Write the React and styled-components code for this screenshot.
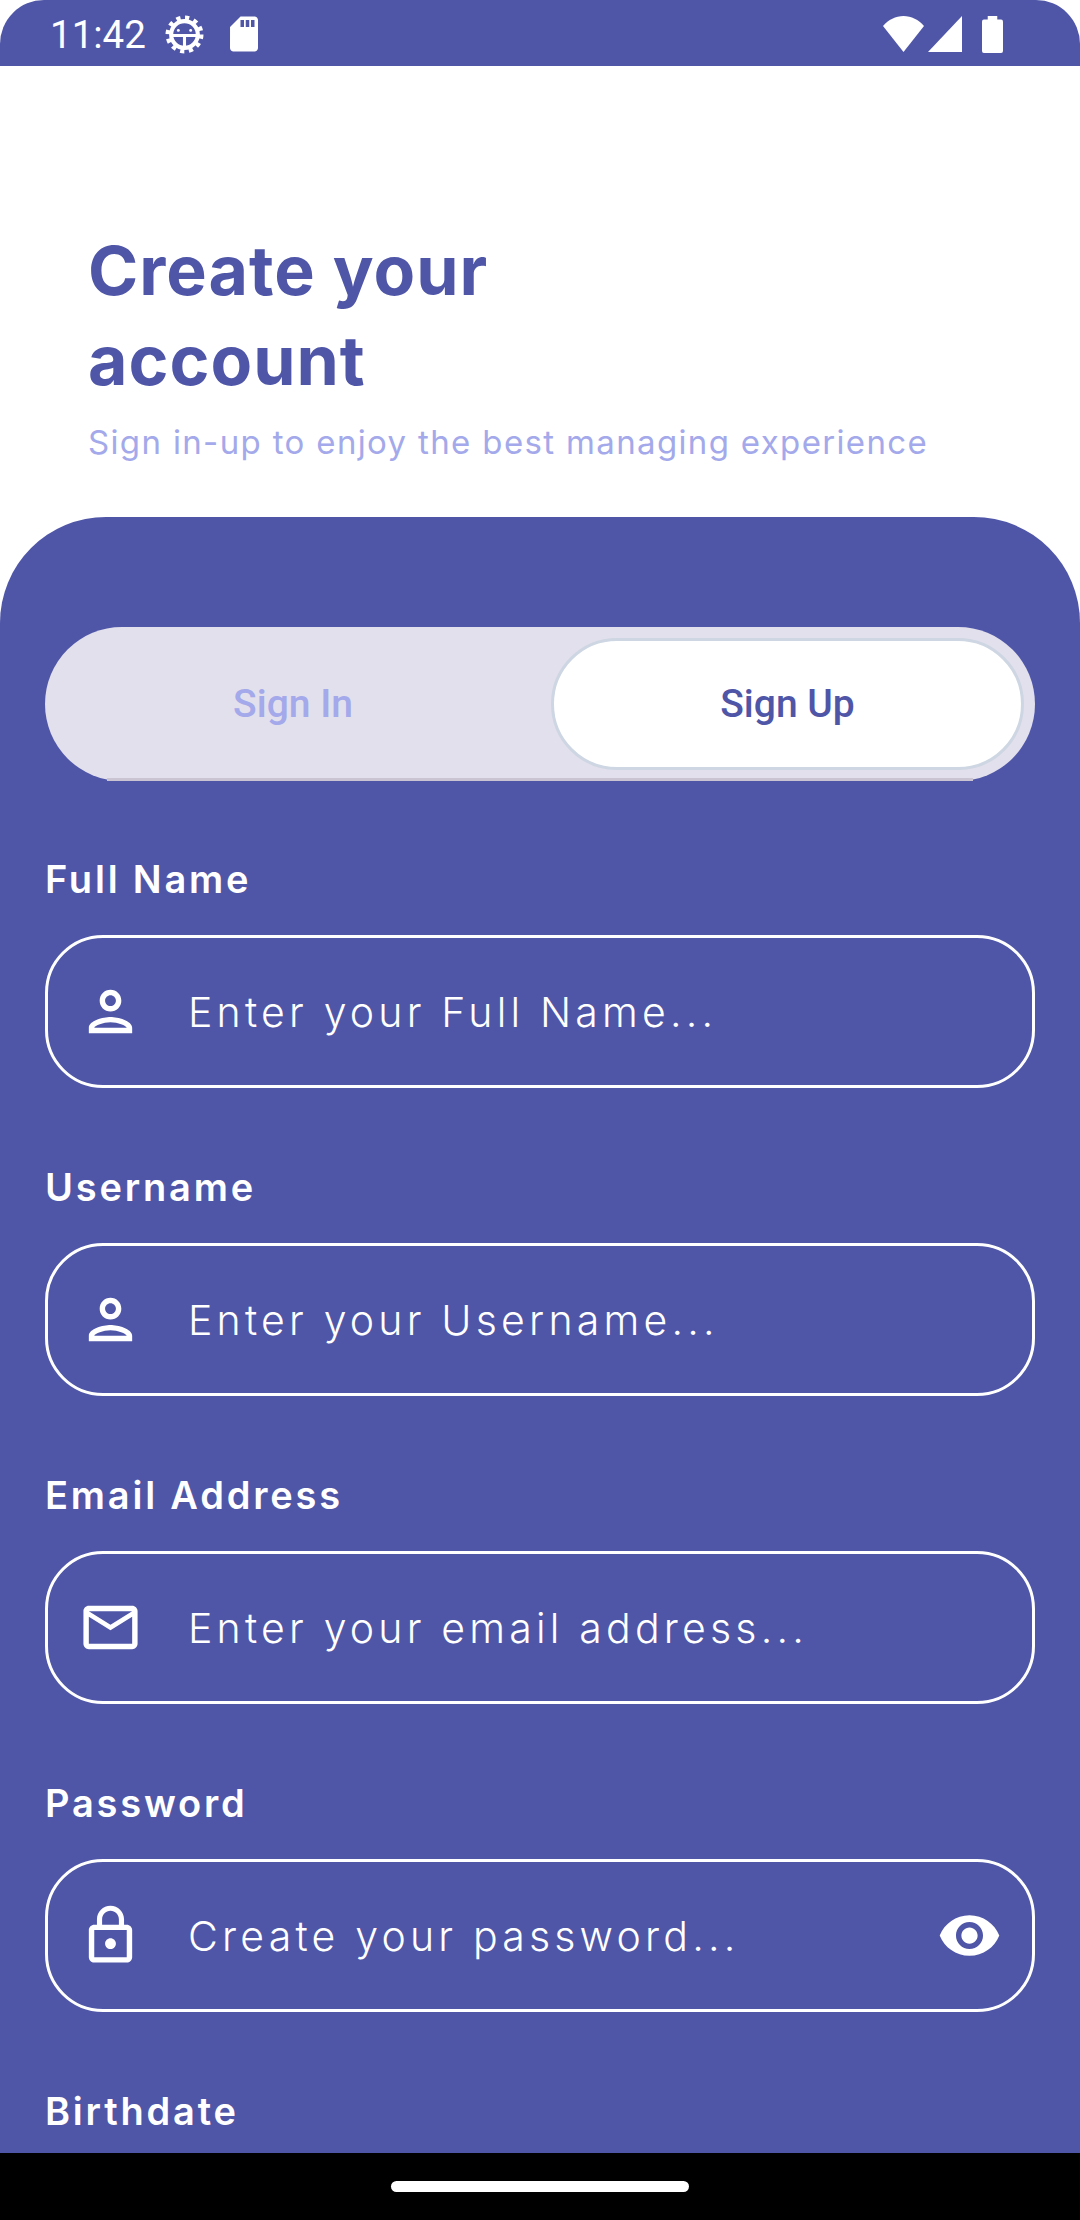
import styled, { createGlobalStyle } from 'styled-components';
import { MdOutlinePerson, MdMailOutline, MdLockOutline, MdVisibility, MdSdCard } from 'react-icons/md';

const INDIGO = '#4f56a8';

const GlobalStyle = createGlobalStyle`
  html, body {
    margin: 0;
    padding: 0;
    background: #000;
  }
  * {
    box-sizing: border-box;
  }
`;

const Screen = styled.div`
  width: 1080px;
  height: 2220px;
  display: flex;
  flex-direction: column;
  overflow: hidden;
  background: #fff;
  font-family: Inter, "Open Sans", sans-serif;
`;

const StatusBar = styled.div`
  flex: none;
  height: 66px;
  display: flex;
  align-items: center;
  justify-content: space-between;
  padding: 2px 77px 0 50px;
  background: ${INDIGO};
  border-radius: 44px 44px 0 0;
  color: #fff;
`;

const StatusGroup = styled.div`
  display: flex;
  align-items: center;
  gap: ${(p) => p.$gap}px;
`;

const Clock = styled.span`
  font-family: Roboto, sans-serif;
  font-size: 38.5px;
`;

const Content = styled.div`
  flex: 1;
  min-height: 0;
  display: flex;
  flex-direction: column;
  overflow: hidden;
`;

const Intro = styled.header`
  flex: none;
  padding: 160px 88px 55px;
`;

const Title = styled.h1`
  margin: 0;
  width: 500px;
  font-size: 68px;
  line-height: 89.5px;
  font-weight: 700;
  letter-spacing: 1px;
  color: ${INDIGO};
`;

const Subtitle = styled.p`
  margin: 17px 0 0;
  font-size: 33px;
  line-height: 40px;
  font-weight: 400;
  letter-spacing: 1.35px;
  white-space: nowrap;
  color: #a3a9ea;
`;

const Card = styled.section`
  flex: 1;
  min-height: 0;
  padding: 110px 45px 0;
  background: ${INDIGO};
  border-radius: 106px 106px 0 0;
`;

const Toggle = styled.div`
  position: relative;
  height: 154px;
  display: flex;
  align-items: center;
  padding: 0 11px 0 0;
  background: #e2e0ec;
  border-radius: 77px;

  &::after {
    content: '';
    position: absolute;
    left: 62px;
    right: 62px;
    bottom: 0;
    height: 3px;
    background: #c9c3d2;
  }
`;

const Tab = styled.div`
  height: 132px;
  width: ${(p) => (p.$active ? '473px' : 'auto')};
  flex: ${(p) => (p.$active ? 'none' : 1)};
  display: flex;
  align-items: center;
  justify-content: center;
  padding-right: ${(p) => (p.$active ? 0 : '10px')};
  font-family: Roboto, sans-serif;
  font-size: 39px;
  font-weight: 500;
  color: ${(p) => (p.$active ? INDIGO : '#a3a9ea')};
  background: ${(p) => (p.$active ? '#fff' : 'transparent')};
  border: ${(p) => (p.$active ? '3px solid #cdd6e2' : 'none')};
  border-radius: 66px;
`;

const Fields = styled.div`
  display: flex;
  flex-direction: column;
  gap: 78px;
  margin-top: 77px;
`;

const Field = styled.div`
  display: flex;
  flex-direction: column;
  gap: 35px;
`;

const Label = styled.label`
  font-size: 38px;
  line-height: 42px;
  font-weight: 600;
  letter-spacing: 2.8px;
  color: #fff;
`;

const InputBox = styled.div`
  height: 153px;
  display: flex;
  align-items: center;
  padding: 0 30px;
  border: 3px solid #fff;
  border-radius: 58px;
  color: #fff;
`;

const Placeholder = styled.span`
  flex: 1;
  margin-left: 45px;
  font-size: 41px;
  font-weight: 300;
  letter-spacing: 4.2px;
  color: #fff;
`;

const BottomNav = styled.div`
  flex: none;
  height: 67px;
  display: flex;
  align-items: center;
  justify-content: center;
  background: #000;
`;

const HomeHandle = styled.div`
  width: 298px;
  height: 11px;
  border-radius: 6px;
  background: #fff;
`;

const DebugGear = () => (
  <svg width="39" height="39" viewBox="0 0 38 38" fill="none" stroke="#fff">
    <circle cx="19" cy="19" r="13" strokeWidth="4" />
    <circle cx="19" cy="19" r="16" strokeWidth="5" strokeDasharray="4 4.38" />
    <path d="M6 20h26M19 20v12" strokeWidth="3" />
    <circle cx="13" cy="15" r="1.4" fill="#fff" stroke="none" />
    <circle cx="25" cy="15" r="1.4" fill="#fff" stroke="none" />
  </svg>
);

const WifiIcon = () => (
  <svg width="41" height="36" viewBox="0 0 42 34" fill="#fff" preserveAspectRatio="none">
    <path d="M0 9.500C5.500 3.500 13 0 21 0s15.500 3.500 21 9.500L21 34z" />
  </svg>
);

const SignalIcon = () => (
  <svg width="34" height="36" viewBox="0 0 34 34" fill="#fff" preserveAspectRatio="none">
    <path d="M34 0v34H0z" />
  </svg>
);

const BatteryIcon = () => (
  <svg width="21" height="37" viewBox="0 0 22 36" fill="#fff" preserveAspectRatio="none">
    <path d="M6 0h10v3.500h4a2 2 0 0 1 2 2V34a2 2 0 0 1-2 2H2a2 2 0 0 1-2-2V5.500a2 2 0 0 1 2-2h4z" />
  </svg>
);

const fields = [
  { label: 'Full Name', hint: 'Enter your Full Name...', Icon: MdOutlinePerson },
  { label: 'Username', hint: 'Enter your Username...', Icon: MdOutlinePerson },
  { label: 'Email Address', hint: 'Enter your email address...', Icon: MdMailOutline },
  { label: 'Password', hint: 'Create your password...', Icon: MdLockOutline, reveal: true },
];

const App = () => {
  return (
    <Screen>
      <GlobalStyle />
      <StatusBar>
        <StatusGroup $gap={19}>
          <Clock>11:42</Clock>
          <DebugGear />
          <MdSdCard size={42} />
        </StatusGroup>
        <StatusGroup $gap={20}>
          <StatusGroup $gap={4}>
            <WifiIcon />
            <SignalIcon />
          </StatusGroup>
          <BatteryIcon />
        </StatusGroup>
      </StatusBar>
      <Content>
        <Intro>
          <Title>Create your account</Title>
          <Subtitle>Sign in-up to enjoy the best managing experience</Subtitle>
        </Intro>
        <Card>
          <Toggle>
            <Tab>Sign In</Tab>
            <Tab $active>Sign Up</Tab>
          </Toggle>
          <Fields>
            {fields.map(({ label, hint, Icon, reveal }) => (
              <Field key={label}>
                <Label>{label}</Label>
                <InputBox>
                  <Icon size={65} />
                  <Placeholder>{hint}</Placeholder>
                  {reveal && <MdVisibility size={65} />}
                </InputBox>
              </Field>
            ))}
            <Field>
              <Label>Birthdate</Label>
            </Field>
          </Fields>
        </Card>
      </Content>
      <BottomNav>
        <HomeHandle />
      </BottomNav>
    </Screen>
  );
};

export default App;
